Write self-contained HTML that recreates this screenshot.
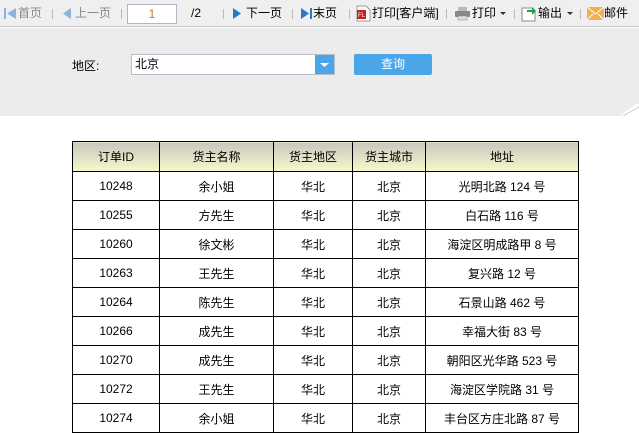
<!DOCTYPE html>
<html><head><meta charset="utf-8"><style>
*{margin:0;padding:0;box-sizing:border-box}
body{width:639px;height:432px;overflow:hidden;background:#fff;font-family:"Liberation Sans","Noto Sans CJK SC",sans-serif;font-size:12px;color:#000;position:relative}
.tb{position:absolute;left:0;top:0;width:639px;height:27px;background:#efefef;border-bottom:1px solid #c8c8c8}
.tb span{position:absolute;top:6px;font-size:12px;line-height:14px;white-space:nowrap}
.sep{position:absolute;top:9px;width:1px;height:10px;background:#bbb}
.gray{position:absolute;left:0;top:28px;width:639px;height:88px;background:#ececec}
table{position:absolute;left:72px;top:141px;border-collapse:collapse;font-family:"Liberation Sans","Noto Sans CJK SC",sans-serif;font-size:12px}
td,th{border:1px solid #000;text-align:center;height:29px;font-weight:normal}
th{height:30px;background:linear-gradient(#c8c8be,#f8f8cc)}
</style></head><body>
<div class="tb">
<svg style="position:absolute;left:4px;top:7px" width="13" height="13"><rect x="0" y="1" width="2" height="11" fill="#8ab4dc"/><polygon points="12,1 3,6.5 12,12" fill="#8ab4dc"/></svg>
<span style="left:18px;color:#888">首页</span>
<div class="sep" style="left:52px"></div>
<svg style="position:absolute;left:62px;top:7px" width="10" height="13"><polygon points="9,1 1,6.5 9,12" fill="#8ab4dc"/></svg>
<span style="left:75px;color:#888">上一页</span>
<div class="sep" style="left:121px"></div>
<div style="position:absolute;left:127px;top:4px;width:50px;height:20px;background:#fff;border:1px solid #b4b4c8;text-align:center;line-height:18px;color:#c87820">1</div>
<span style="left:191px">/2</span>
<div class="sep" style="left:223px"></div>
<svg style="position:absolute;left:232px;top:7px" width="10" height="13"><polygon points="1,1 9,6.5 1,12" fill="#2a78c8"/></svg>
<span style="left:246px">下一页</span>
<div class="sep" style="left:292px"></div>
<svg style="position:absolute;left:300px;top:7px" width="13" height="13"><polygon points="1,1 9,6.5 1,12" fill="#2a78c8"/><rect x="10" y="1" width="2" height="11" fill="#2a78c8"/></svg>
<span style="left:313px">末页</span>
<div class="sep" style="left:349px"></div>
<svg style="position:absolute;left:356px;top:5px" width="15" height="17"><path d="M1 1h9l4 4v11H1z" fill="#fff" stroke="#999"/><rect x="1" y="5" width="9" height="9" fill="#c82020"/><text x="2" y="12" font-size="6" fill="#fff" font-family="Liberation Sans">FL</text></svg>
<span style="left:372px">打印[客户端]</span>
<div class="sep" style="left:446px"></div>
<svg style="position:absolute;left:454px;top:6px" width="17" height="15"><rect x="4" y="1" width="9" height="4" fill="#bbb"/><rect x="1" y="5" width="15" height="6" rx="1" fill="#888"/><rect x="4" y="10" width="9" height="4" fill="#ddd" stroke="#888" stroke-width=".5"/></svg>
<span style="left:472px">打印</span>
<svg style="position:absolute;left:500px;top:12px" width="6" height="4"><polygon points="0,0 6,0 3,3" fill="#333"/></svg>
<div class="sep" style="left:514px"></div>
<svg style="position:absolute;left:521px;top:5px" width="16" height="17"><path d="M1 3h10l3 3v10H1z" fill="#fff" stroke="#888"/><path d="M6 5h5V2l4 4-4 4V7H6z" fill="#20a040"/></svg>
<span style="left:538px">输出</span>
<svg style="position:absolute;left:567px;top:12px" width="6" height="4"><polygon points="0,0 6,0 3,3" fill="#333"/></svg>
<div class="sep" style="left:580px"></div>
<svg style="position:absolute;left:587px;top:7px" width="17" height="13"><rect x="0" y="0" width="17" height="13" fill="#f0b050"/><path d="M0 0l8.5 7L17 0M0 13l6-6M17 13l-6-6" stroke="#fff" fill="none"/></svg>
<span style="left:604px">邮件</span>
</div>
<div class="gray"></div>
<svg style="position:absolute;left:620px;top:104px" width="19" height="12"><polygon points="0,12 19,12 19,0 16,0" fill="#fff"/><line x1="3" y1="12" x2="19" y2="3" stroke="#ccc"/></svg>
<div style="position:absolute;left:72px;top:57px;font-size:12px">地区:</div>
<div style="position:absolute;left:131px;top:54px;width:204px;height:21px;background:#fff;border:1px solid #b8bccc;line-height:19px;padding-left:3px">北京</div>
<div style="position:absolute;left:315px;top:55px;width:19px;height:19px;background:#4aa6e8"><svg width="19" height="19"><polygon points="5,8 14,8 9.5,12" fill="#fff"/></svg></div>
<div style="position:absolute;left:354px;top:54px;width:78px;height:21px;background:#4aa6e8;border-radius:2px;color:#fff;text-align:center;line-height:21px">查询</div>
<table>
<tr><th style="width:87px">订单ID</th><th style="width:114px">货主名称</th><th style="width:79px">货主地区</th><th style="width:73px">货主城市</th><th style="width:153px">地址</th></tr>
<tr><td>10248</td><td>余小姐</td><td>华北</td><td>北京</td><td>光明北路 124 号</td></tr>
<tr><td>10255</td><td>方先生</td><td>华北</td><td>北京</td><td>白石路 116 号</td></tr>
<tr><td>10260</td><td>徐文彬</td><td>华北</td><td>北京</td><td>海淀区明成路甲 8 号</td></tr>
<tr><td>10263</td><td>王先生</td><td>华北</td><td>北京</td><td>复兴路 12 号</td></tr>
<tr><td>10264</td><td>陈先生</td><td>华北</td><td>北京</td><td>石景山路 462 号</td></tr>
<tr><td>10266</td><td>成先生</td><td>华北</td><td>北京</td><td>幸福大街 83 号</td></tr>
<tr><td>10270</td><td>成先生</td><td>华北</td><td>北京</td><td>朝阳区光华路 523 号</td></tr>
<tr><td>10272</td><td>王先生</td><td>华北</td><td>北京</td><td>海淀区学院路 31 号</td></tr>
<tr><td>10274</td><td>余小姐</td><td>华北</td><td>北京</td><td>丰台区方庄北路 87 号</td></tr>
</table>
</body></html>
